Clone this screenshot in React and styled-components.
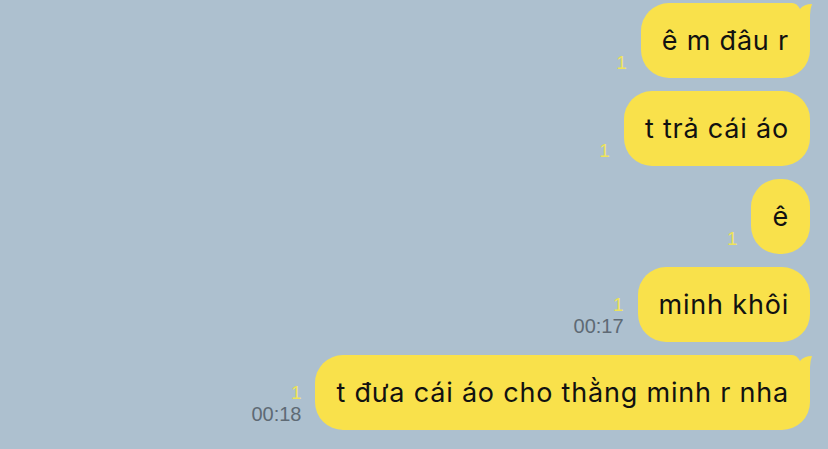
import React from 'react';
import styled, { createGlobalStyle } from 'styled-components';

const messages = [
  { text: 'ê m đâu r', tail: true },
  { text: 't trả cái áo' },
  { text: 'ê' },
  { text: 'minh khôi', time: '00:17' },
  { text: 't đưa cái áo cho thằng minh r nha', tail: true, time: '00:18' },
];

const App = () => {
  return (
    <>
      <GlobalStyle />
      <Chat>
        {messages.map((m, i) => (
          <Row key={i}>
            <Meta>
              <Unread>1</Unread>
              {m.time && <Time>{m.time}</Time>}
            </Meta>
            <Bubble>
              {m.text}
              {m.tail && (
                <Tail viewBox="0 0 30 28" width="30" height="28">
                  <path d="M0 0 L10 0 Q15 0 18 6 Q22 1 30 1 Q28 6 28 12 L28 28 L0 28 Z" fill="#F9E14B" />
                </Tail>
              )}
            </Bubble>
          </Row>
        ))}
      </Chat>
    </>
  );
};

const GlobalStyle = createGlobalStyle`
  html, body {
    margin: 0;
    padding: 0;
    background: #ADC0CF;
    font-family: Inter, "Liberation Sans", sans-serif;
  }
`;

const Chat = styled.div`
  width: 828px;
  height: 449px;
  box-sizing: border-box;
  padding: 3px 18px 0 0;
  display: flex;
  flex-direction: column;
  align-items: flex-end;
  gap: 13px;
  background: #ADC0CF;
  overflow: hidden;
`;

const Row = styled.div`
  display: flex;
  align-items: flex-end;
  gap: 14px;
`;

const Meta = styled.div`
  display: flex;
  flex-direction: column;
  align-items: flex-end;
  margin-bottom: 5px;
  font-family: "Liberation Sans", Arial, sans-serif;
`;

const Unread = styled.span`
  font-size: 19px;
  line-height: 21px;
  color: #EDE35A;
`;

const Time = styled.span`
  font-size: 20px;
  line-height: 22px;
  color: #5E6A75;
`;

const Bubble = styled.div`
  position: relative;
  background: #F9E14B;
  color: #111;
  font-size: 27px;
  letter-spacing: 0.8px;
  line-height: 33px;
  padding: 21px 21px;
  border-radius: 28px;
  white-space: nowrap;
`;

const Tail = styled.svg`
  position: absolute;
  top: 0;
  right: -2px;
  display: block;
`;

export default App;
